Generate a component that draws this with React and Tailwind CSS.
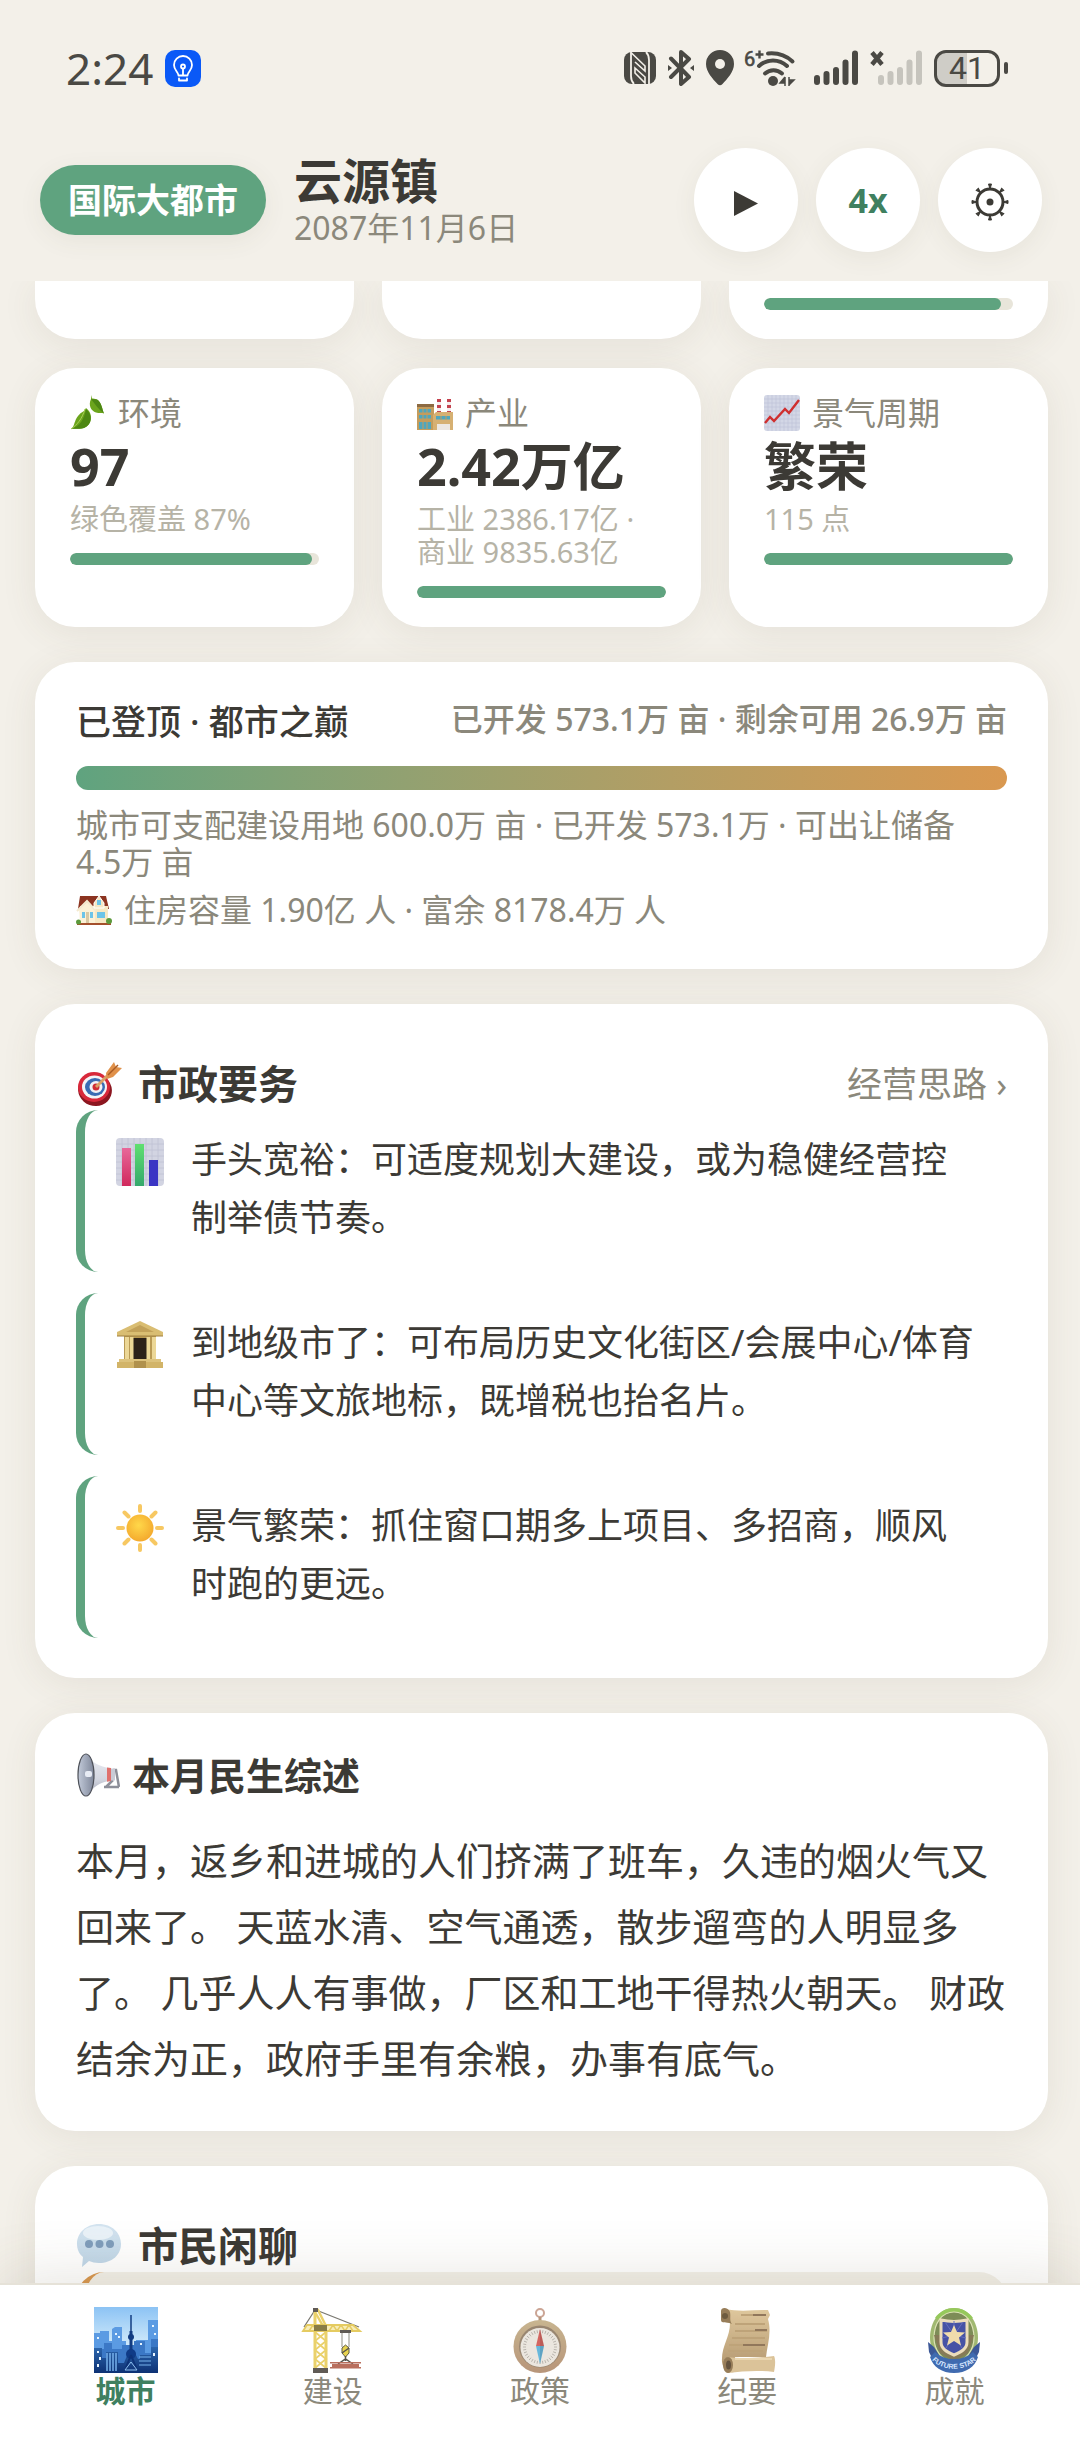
import clsx from "clsx";

/* ---------- status bar icons ---------- */

function BulbIcon() {
  return (
    <svg viewBox="0 0 36 37" className="h-[37px] w-9">
      <rect width="36" height="37" rx="10" fill="#0a59f7" />
      <g fill="none" stroke="#fff" strokeWidth="1.8" strokeLinecap="round" strokeLinejoin="round">
        <path d="M13.5 25.5c0-3.5-4.5-5-4.5-10.5a9 9 0 0 1 18 0c0 5.500-4.500 7-4.500 10.500z" />
        <path d="M14 28.500v2h8v-2M18 25v-6" />
        <circle cx="18" cy="16.500" r="2" />
      </g>
    </svg>
  );
}

function NfcIcon() {
  return (
    <svg viewBox="0 0 32 34" className="h-[34px] w-8">
      <rect y="1" width="32" height="32" rx="8" fill="#4a4944" />
      <path d="M7 1v24c0 4 1 6 3 8M25 33V9c0-4-1-6-3-8" stroke="#f3f0e9" strokeWidth="1.800" fill="none" />
      <path d="M7.500 2 21 15v5L11 11M11 17l10 9v6L11 22z" stroke="#f3f0e9" strokeWidth="1.600" fill="none" />
    </svg>
  );
}

function BluetoothIcon() {
  return (
    <svg viewBox="0 0 26 36" className="h-9 w-[26px]" fill="none" stroke="#4a4944" strokeWidth="4" strokeLinecap="round" strokeLinejoin="round">
      <path d="M3 8.500 21 27l-8 7V2l8 7L3 27" />
      <path d="M0 15v6l4-3zM26 15v6l-4-3z" fill="#4a4944" stroke="none" />
    </svg>
  );
}

function PinIcon() {
  return (
    <svg viewBox="0 0 28 36" className="h-9 w-7">
      <path d="M14 0A14 14 0 0 0 0 14c0 8 7 15 11.500 20a3.500 3.500 0 0 0 5 0C21 29 28 22 28 14A14 14 0 0 0 14 0z" fill="#4a4944" />
      <circle cx="14" cy="14" r="5" fill="#f3f0e9" />
    </svg>
  );
}

function WifiIcon() {
  return (
    <svg viewBox="0 0 56 38" className="h-[38px] w-14 overflow-visible">
      <text x="-2" y="17" fontSize="20" fill="#4a4944" stroke="#4a4944" strokeWidth=".6" className="font-['Roboto',sans-serif]">6</text>
      <path d="M9.500 5.500h8M13.500 1.500v8" stroke="#4a4944" strokeWidth="2.400" />
      <g fill="none" stroke="#4a4944" strokeWidth="4" strokeLinecap="round">
        <path d="M22 4.500c10-1 18 2 24.500 8" />
        <path d="M13 17c8-7.500 20-7.500 28 0" />
        <path d="M19 24.500c5-4.500 12-4.500 17 0" />
      </g>
      <circle cx="27" cy="32" r="5" fill="#4a4944" />
      <path d="M39 28v9M39 28l-5 6h5M43 28v9M43 36l5-5h-5" fill="#4a4944" stroke="#4a4944" strokeWidth="1.500" />
    </svg>
  );
}

function SignalIcon({ off }) {
  return (
    <svg viewBox={off ? "-8 0 52 36" : "0 0 44 36"} className={off ? "h-9 w-[52px]" : "h-9 w-11"}>
      <g stroke={off ? "#c6c4bd" : "#4a4944"} strokeWidth="6" strokeLinecap="round">
        <path d="M3 28v4M12.500 24v8M22 20v12M31.500 12.500V32M41 3.500V32" />
      </g>
      {off && <path d="M-6 2.500 4 14.500M4 2.500-6 14.500" stroke="#4a4944" strokeWidth="4.500" />}
    </svg>
  );
}

function Battery() {
  return (
    <div className="flex items-center gap-1">
      <div className="flex h-[37px] w-[66px] items-center justify-center rounded-xl border-[3px] border-[#4a4944] bg-linear-to-r from-[#cfcdc7] from-50% to-transparent to-50% font-['Roboto',sans-serif] text-[32px] leading-8">
        41
      </div>
      <div className="h-3 w-1 rounded-sm bg-[#4a4944]" />
    </div>
  );
}

/* ---------- emoji style drawings ---------- */

function LeafIcon({ className }) {
  return (
    <svg viewBox="0 0 36 36" className={className}>
      <path d="M1 34c5-3 2-12 13-18l2-3c8 6 6 17-2 20-4 1.500-8 0-13 1z" fill="#6ba41c" />
      <path d="M1 34C10 31 14 25 16 14c7 6 6 16-2 19-4 1.500-8 0-13 1z" fill="#4d8713" />
      <path d="M1 34c6-4 11-10 14-20" stroke="#a8cf5a" strokeWidth="1" fill="none" />
      <path d="M21 0v4c-3 6 0 12 5 13.500 3 1 6 0 8 1-2-4-2-11-7-14-2-1-4-1-5-1z" fill="#6ba41c" />
      <path d="M21 4c4 5 7 10 13 14.500-2-4-2-11-7-14z" fill="#4d8713" />
    </svg>
  );
}

function FactoryIcon({ className }) {
  return (
    <svg viewBox="0 0 36 36" className={className}>
      <path d="M20 4h4v17h-4zM30 4h4v17h-4z" fill="#f4eeee" />
      <path d="M20 4h4v3h-4zM20 10h4v3h-4zM20 16h4v3h-4zM30 4h4v3h-4zM30 10h4v3h-4zM30 16h4v3h-4z" fill="#c4434f" />
      <path d="M0 9h17v26H0z" fill="#c49c5c" />
      <path d="M0 9h17v3H0z" fill="#8c6a42" />
      <path d="M16 20l3-3h17v18H16z" fill="#d6b072" />
      <path d="M2 14h12v3.500H2zM2 20h12v3.500H2zM2 27h12v7H2zM19 21h14v3.500H19z" fill="#4fa6bd" />
      <path d="M6 14v20M10 14v20M24 21v4M29 21v4" stroke="#c49c5c" strokeWidth="1" />
      <path d="M20 29h13v6H20z" fill="#ece7e1" />
    </svg>
  );
}

function ChartIcon({ className }) {
  return (
    <svg viewBox="0 0 36 36" className={className}>
      <rect width="36" height="36" rx="3" fill="#d3d7e6" />
      <path d="M4 0v36M8 0v36M12 0v36M16 0v36M20 0v36M24 0v36M28 0v36M32 0v36M0 4h36M0 8h36M0 12h36M0 16h36M0 20h36M0 24h36M0 28h36M0 32h36" stroke="#bcc1d6" strokeWidth=".6" />
      <path d="M1 28l5-6 4 4L21 14l4 4L35 5" fill="none" stroke="#cf2f2f" strokeWidth="2.400" />
    </svg>
  );
}

function HouseIcon({ className }) {
  return (
    <svg viewBox="0 0 36 32" className={className}>
      <path d="M4 2h26l3 13H2z" fill="#8c3420" />
      <path d="M4 12h28v17H4z" fill="#f6e8c4" />
      <path d="M3 15 11 8l8 8v13H4z" fill="#fbf1d6" />
      <path d="M1 17 11 7l9 10" fill="none" stroke="#f4ead0" strokeWidth="2" />
      <path d="M18 9l5-7 5 7v5H18z" fill="#f6e8c4" stroke="#fff" strokeWidth="1" />
      <path d="M21 6h4v5h-4zM21 18h8v6h-8zM6 18h3v6H6zM14 18h3v6h-3z" fill="#6cc4e8" />
      <path d="M10 18h3v11h-3z" fill="#d8c9a4" />
      <path d="M1 30h34" stroke="#a4502c" strokeWidth="2" />
      <circle cx="2.500" cy="28" r="2.500" fill="#5c9a3c" />
      <circle cx="33" cy="27" r="3" fill="#5c9a3c" />
    </svg>
  );
}

function TargetIcon({ className }) {
  return (
    <svg viewBox="0 0 46 46" className={className}>
      <ellipse cx="19" cy="29" rx="17" ry="16" fill="#8c1620" transform="rotate(20 19 29)" />
      <ellipse cx="18" cy="26" rx="16" ry="15" fill="#d8283a" />
      <ellipse cx="18.500" cy="26" rx="12.500" ry="11.500" fill="#f4f4f6" />
      <ellipse cx="19" cy="26" rx="10" ry="9" fill="#3a6cb4" />
      <ellipse cx="20" cy="26" rx="6.500" ry="6" fill="#f1f2f6" />
      <circle cx="20" cy="26" r="3.500" fill="#cf2c34" />
      <path d="M20 26 37 9" stroke="#d9a066" strokeWidth="3" />
      <path d="M30 12l8-11 2 5 6 1-9 9-6 2z" fill="#e0914a" />
      <path d="M32 14 42 4" stroke="#a85a22" strokeWidth="1.500" />
    </svg>
  );
}

function BarsIcon({ className }) {
  return (
    <svg viewBox="0 0 48 48" className={className}>
      <defs>
        <linearGradient id="bar-pink" x2="0" y2="1"><stop stopColor="#e8689a" /><stop offset="1" stopColor="#d0295c" /></linearGradient>
        <linearGradient id="bar-green" x2="0" y2="1"><stop stopColor="#5fe070" /><stop offset="1" stopColor="#35a86c" /></linearGradient>
      </defs>
      <rect width="48" height="48" rx="4" fill="#d2d4e2" />
      <path d="M6 0v48M12 0v48M18 0v48M24 0v48M30 0v48M36 0v48M42 0v48M0 6h48M0 12h48M0 18h48M0 24h48M0 30h48M0 36h48M0 42h48" stroke="#bfc2d4" strokeWidth=".8" />
      <path d="M6 10h9v38H6z" fill="url(#bar-pink)" />
      <path d="M19 6h9v42h-9z" fill="url(#bar-green)" />
      <path d="M33 22h9v26h-9z" fill="#3b35c4" />
    </svg>
  );
}

function TempleIcon({ className }) {
  return (
    <svg viewBox="0 0 48 48" className={className}>
      <path d="M8 15h32v24H8z" fill="#b99a54" />
      <path d="M17 17h14v22H17z" fill="#2c2118" />
      <path d="M24 0 47 11v4H1v-4z" fill="#d9bd72" />
      <path d="M24 4 38 11H10z" fill="#c2a159" />
      <path d="M9 16h4v24H9zM14 16h3.500v24H14zM30.500 16H34v24h-3.500zM36 16h4v24h-4z" fill="#ecd796" />
      <path d="M3 38h42v3H3z" fill="#dcc27c" />
      <path d="M1 41h17v6H1zM30 41h17v6H30z" fill="#d2b468" />
      <path d="M18 40h12v7H18z" fill="#b0914c" />
      <path d="M1 15h46" stroke="#a08040" strokeWidth="1" />
    </svg>
  );
}

function SunIcon({ className }) {
  return (
    <svg viewBox="0 0 48 48" className={className}>
      <defs>
        <radialGradient id="sun-body" cx=".45" cy=".4" r=".65"><stop stopColor="#ffd84a" /><stop offset="1" stopColor="#f3a62b" /></radialGradient>
      </defs>
      <path d="M24 2v5M24 41v5M2 24h5M41 24h5M8.500 8.500l4 4M35.500 35.500l4 4M39.500 8.500l-4 4M12.500 35.500l-4 4" stroke="#f7c862" strokeWidth="4" strokeLinecap="round" />
      <circle cx="24" cy="24" r="13.500" fill="url(#sun-body)" />
    </svg>
  );
}

function HornIcon({ className }) {
  return (
    <svg viewBox="0 0 44 44" className={className}>
      <defs>
        <linearGradient id="horn-cone" x2="0" y2="1"><stop stopColor="#eceef4" /><stop offset=".6" stopColor="#d3d6e0" /><stop offset="1" stopColor="#9da1b0" /></linearGradient>
        <linearGradient id="horn-mouth" x2="1"><stop stopColor="#c2cad9" /><stop offset="1" stopColor="#7f879a" /></linearGradient>
      </defs>
      <path d="M37 17h3l3 17M28 34l15 0M37 27l-7 7" fill="none" stroke="#8d8f99" strokeWidth="2.500" />
      <path d="M10 1c5 8 14 13 24 14v13c-10 1-17 6-23 15z" fill="url(#horn-cone)" />
      <path d="M31 14.500l4 .5v13l-4 .8z" fill="#e0706c" />
      <path d="M35 15.500h4v12h-4z" fill="#c9cbd6" />
      <ellipse cx="10" cy="22" rx="8" ry="21" fill="url(#horn-mouth)" stroke="#4d5058" strokeWidth="1.200" />
      <rect x="9" y="18" width="7" height="6" rx="2" fill="#e7ebf4" />
    </svg>
  );
}

function ChatIcon({ className }) {
  return (
    <svg viewBox="0 0 46 44" className={className}>
      <defs>
        <linearGradient id="chat-body" x2="0" y2="1"><stop stopColor="#d4e4f0" /><stop offset="1" stopColor="#bfd6e8" /></linearGradient>
      </defs>
      <path d="M23 0c13 0 22 9 22 20S36 39 23 39c-4 0-7-1-10-2l-7 6 1-10C3 30 1 25 1 20 1 9 10 0 23 0z" fill="url(#chat-body)" />
      <ellipse cx="22" cy="9" rx="15" ry="7" fill="#e9f2f8" />
      <g fill="#7f9dbb">
        <circle cx="13" cy="20" r="4" />
        <circle cx="23.500" cy="20" r="4" />
        <circle cx="34" cy="20" r="4" />
      </g>
    </svg>
  );
}

function CityIcon({ className }) {
  return (
    <svg viewBox="0 0 64 66" className={className}>
      <defs>
        <linearGradient id="city-sky" x2="0" y2="1"><stop stopColor="#8cc3f4" /><stop offset=".6" stopColor="#d4ecfb" /></linearGradient>
        <linearGradient id="city-front" x2="0" y2="1"><stop stopColor="#2c66ad" /><stop offset="1" stopColor="#0c2f72" /></linearGradient>
      </defs>
      <path d="M0 0h64v66H0z" fill="url(#city-sky)" />
      <path d="M0 26h6v-2h9v10h3V22l3-2h7v14h4v8h10v-9h12v-20h10v53H0z" fill="#5b9be3" />
      <path d="M0 42h10v-6h8v6h10v-4h12v-4h11v12h6V32h7v34H0z" fill="#3b78c6" />
      <path d="M0 41h8v10h4v-6h12v11h6l4-10h7l3 6h2v-4h11v-8h7v27H0z" fill="url(#city-front)" />
      <path d="M13 46v18M16 46v18M19 46v18M22 46v18" stroke="#77b1ec" strokeWidth="1.500" />
      <path d="M45 50h12M45 54h12M45 58h12" stroke="#77b1ec" strokeWidth="1.200" />
      <path d="M37 8v18" stroke="#123c82" strokeWidth="1.500" />
      <path d="M35.500 24h3v26h-3z" fill="#123c82" />
      <circle cx="37" cy="30" r="3" fill="#123c82" />
      <circle cx="37" cy="47" r="5" fill="#0f3a86" />
      <path d="M37 48l-6 15M37 48l6 15" stroke="#0d3277" strokeWidth="2" />
      <path d="M31 63l6-8 6 8z" fill="none" stroke="#8fc0f0" strokeWidth="1" />
      <path d="M4 44v2M6 50v3M4 57v3M22 26v2M25 29v2M4 30v2M47 36v2M59 18v2M61 26v2M60 46v3" stroke="#e8f5ff" strokeWidth="2" />
    </svg>
  );
}

function CraneIcon({ className }) {
  return (
    <svg viewBox="0 0 64 66" className={className}>
      <path d="M14 3 3 20M15 3l43 17" stroke="#6c6a62" strokeWidth="1.300" fill="none" />
      <path d="M14 3v58M25 22v39" stroke="#e8cd5c" strokeWidth="3" />
      <path d="M14 25l11 9-11 9 11 9-11 9M25 25l-11 9 11 9-11 9 11 9" stroke="#e8cd5c" strokeWidth="1.800" fill="none" />
      <path d="M14 5l8 14M13 3h4l8 16" stroke="#e8cd5c" strokeWidth="2.500" fill="none" />
      <path d="M2 24l4-6h46l7 6z" fill="#f8ecb0" stroke="#e3c650" strokeWidth="1.800" />
      <path d="M8 24l4-6 4 6M28 24l4-6 4 6 4-6 4 6 4-6 4 6" stroke="#e3c650" strokeWidth="1.500" fill="none" />
      <path d="M13 18h13v6H13z" fill="#7d7033" />
      <path d="M12 1h5v4h-5zM39 23h11v3H39zM12 61h15v5H12z" fill="#4f4a44" />
      <path d="M41 26v14M48 26v14" stroke="#9a9890" strokeWidth="1.200" />
      <path d="M41 41l3.500-3 3.500 3v5l-3.500 4-3.500-4z" fill="#e6cf3d" stroke="#4f4a30" strokeWidth="1" />
      <path d="M41 46l7-5M44.500 49v5M37 57l7.500-5 7.500 5" stroke="#454239" strokeWidth="1.500" fill="none" />
      <path d="M29 55h31v1.500H29zM31 57h27v3H31zM29 60h31v1.500H29z" fill="#b2604c" />
    </svg>
  );
}

function CompassIcon({ className }) {
  const ticks = Array.from({ length: 36 }, (_, i) => i * 10);
  return (
    <svg viewBox="0 0 64 66" className={className}>
      <defs>
        <linearGradient id="compass-rim" x2="0" y2="1"><stop stopColor="#c2ad84" /><stop offset="1" stopColor="#b08a6c" /></linearGradient>
      </defs>
      <circle cx="32" cy="6" r="4" fill="none" stroke="#c69c8a" strokeWidth="2" />
      <path d="M32 10v5" stroke="#b08a6c" strokeWidth="3" />
      <circle cx="32" cy="39.500" r="26.500" fill="url(#compass-rim)" />
      <circle cx="32" cy="39.500" r="21" fill="#8f7a62" />
      <circle cx="32" cy="40.500" r="19.500" fill="#e9e4dc" />
      {ticks.map((a) => (
        <path key={a} d="M32 23v3" stroke="#a8a29a" strokeWidth=".8" transform={`rotate(${a} 32 40)`} />
      ))}
      <path d="M32 22l4 17h-8z" fill="#cf5650" />
      <path d="M32 57l4-18h-8z" fill="#58b0d8" />
      <path d="M32 22v35l4-18z" fill="#000" opacity=".12" />
    </svg>
  );
}

function ScrollIcon({ className }) {
  return (
    <svg viewBox="0 0 64 66" className={className}>
      <defs>
        <linearGradient id="scroll-page" x2="0" y2="1"><stop stopColor="#dcc293" /><stop offset="1" stopColor="#a98a5e" /></linearGradient>
      </defs>
      <path d="M10 2c14 3 28 1 43 1l2 5-2 4c4 14-1 27-2 38H20v15c-8 1-12-3-13-10-1-16 8-24 8-39L10 15z" fill="url(#scroll-page)" />
      <path d="M6 4c0-4 7-4 9 1 1 5-1 8 2 12-5-3-11 0-11-4z" fill="#8c7048" />
      <circle cx="10" cy="9" r="3" fill="#5f4a2c" />
      <path d="M26 8h24M20 17h30M20 24h32M17 31h33M14 38h35M13 44h35" stroke="#b89a6b" strokeWidth="1.800" />
      <path d="M38 8h13M40 23h12M28 38h22" stroke="#86694a" strokeWidth="2" />
      <path d="M13 50c12 2 30 1 46-1 2 4 1 11 0 16-15-2-31-1-46 1-6-3-6-14 0-16z" fill="#d8bd8e" />
      <ellipse cx="13" cy="58" rx="5" ry="8" fill="#8c7048" />
      <ellipse cx="13.500" cy="58" rx="2.500" ry="4.500" fill="#54412a" />
      <path d="M20 52h37" stroke="#e8d2a8" strokeWidth="2" />
    </svg>
  );
}

function BadgeIcon({ className }) {
  return (
    <svg viewBox="0 0 64 66" className={className}>
      <defs>
        <path id="badge-arc" d="M11 54a25 17 0 0 0 42 0" />
      </defs>
      <path d="M32 1C18 1 8 14 8 31c0 13 10 28 24 28s24-15 24-28C56 14 46 1 32 1z" fill="#96b162" />
      <path d="M32 1c-8 0-15 4-19 10l7 3c6-6 18-6 24 0l7-3C47 5 40 1 32 1z" fill="#8bc34a" />
      <path d="M32 5C20 5 12 16 12 31c0 11 8 24 20 24s20-13 20-24C52 16 44 5 32 5z" fill="#6f8045" stroke="#d9dfae" strokeWidth="1.200" />
      <path d="M12 28h40L46 46 32 54 18 46z" fill="#7a6c45" />
      <path d="M19 13c9 2 17 2 26 0v22c0 7-6 10-13 13-7-3-13-6-13-13z" fill="#34409c" stroke="#ead9b4" strokeWidth="3" />
      <path d="M32 28 23 15M32 28 41 15M32 28 20 31M32 28l12 3M32 28l-8 13M32 28l8 13M32 28V14" stroke="#5560b8" strokeWidth="1" />
      <path d="M32 18l3 7 8 .5-6 5 2 8-7-4.500-7 4.500 2-8-6-5 8-.5z" fill="#f0d9a4" />
      <path d="M6 35l6 5 5 8-6 5-4-8zM58 35l-6 5-5 8 6 5 4-8z" fill="#27468c" />
      <path d="M13 45a24 18 0 0 0 38 0l5 5c-3 10-12 16-24 16S11 60 8 50z" fill="#2c5ca8" />
      <text fontSize="7" fontWeight="700" fill="#d3e4ff" textAnchor="middle" className="font-['Liberation_Sans',sans-serif]">
        <textPath href="#badge-arc" startOffset="50%">FUTURE STAR</textPath>
      </text>
    </svg>
  );
}

function PlayIcon() {
  return (
    <svg viewBox="0 0 26 34" className="h-[34px] w-[26px]">
      <path d="M1 8v25l24-12.500z" fill="#3c3a35" />
    </svg>
  );
}

function GearIcon() {
  const teeth = [0, 45, 90, 135, 180, 225, 270, 315];
  return (
    <svg viewBox="0 0 38 42" className="h-[42px] w-[38px]">
      <circle cx="19" cy="23" r="13" fill="none" stroke="#3c3a35" strokeWidth="3" />
      {teeth.map((a) => (
        <path key={a} d="M19 10 17.500 5h3z" fill="#3c3a35" stroke="#3c3a35" transform={`rotate(${a} 19 23)`} />
      ))}
      <circle cx="19" cy="23" r="3.500" fill="#3c3a35" />
    </svg>
  );
}

/* ---------- data ---------- */

const stats = [
  { icon: LeafIcon, label: "环境", value: "97", notes: ["绿色覆盖 87%"], percent: 97 },
  { icon: FactoryIcon, label: "产业", value: "2.42万亿", notes: ["工业 2386.17亿 ·", "商业 9835.63亿"], percent: 100 },
  { icon: ChartIcon, label: "景气周期", value: "繁荣", notes: ["115 点"], percent: 100 },
];

const tasks = [
  { icon: BarsIcon, text: "手头宽裕：可适度规划大建设，或为稳健经营控制举债节奏。" },
  { icon: TempleIcon, text: "到地级市了：可布局历史文化街区/会展中心/体育中心等文旅地标，既增税也抬名片。" },
  { icon: SunIcon, text: "景气繁荣：抓住窗口期多上项目、多招商，顺风时跑的更远。" },
];

const tabs = [
  { icon: CityIcon, label: "城市", active: true },
  { icon: CraneIcon, label: "建设" },
  { icon: CompassIcon, label: "政策" },
  { icon: ScrollIcon, label: "纪要" },
  { icon: BadgeIcon, label: "成就" },
];

/* ---------- pieces ---------- */

function Meter({ percent }) {
  return (
    <div className="h-3 overflow-hidden rounded-full bg-[#e8e5da]">
      <div className="h-full rounded-full bg-[#5fa37f]" style={{ width: `${percent}%` }} />
    </div>
  );
}

function Card({ className, children }) {
  return (
    <section className={clsx("rounded-[40px] bg-white px-[41px] shadow-[0_6px_36px_rgba(90,80,50,0.09)]", className)}>
      {children}
    </section>
  );
}

function StatCard({ icon: Icon, label, value, notes, percent }) {
  return (
    <section className="rounded-[40px] bg-white px-[35px] pt-7 pb-[29px] shadow-[0_6px_36px_rgba(90,80,50,0.09)]">
      <h3 className="flex h-[34px] items-center gap-3 text-[32px] leading-[34px] text-[#8b887b]">
        <Icon className="h-9 w-9" />
        {label}
      </h3>
      <p className="text-[52px] leading-[72px] font-bold">{value}</p>
      <div className="mb-[18px] text-[29px] leading-[33px] whitespace-nowrap text-[#b6b3a6]">
        {notes.map((note) => (
          <p key={note}>{note}</p>
        ))}
      </div>
      <Meter percent={percent} />
    </section>
  );
}

function RoundButton({ label, children }) {
  return (
    <button
      aria-label={label}
      className="flex h-[104px] w-[104px] items-center justify-center rounded-full bg-white text-[34px] font-bold text-[#3f8060] shadow-[0_6px_24px_rgba(90,80,50,0.07)]"
    >
      {children}
    </button>
  );
}

export default function App() {
  return (
    <div className="flex h-screen flex-col overflow-hidden bg-[#f3f0e9] font-['Noto_Sans','Noto_Sans_CJK_SC',sans-serif] text-[#3c3a35]">
      {/* Status bar */}
      <div className="flex h-[136px] shrink-0 items-center justify-between pr-[72px] pl-[66px] text-[#4a4944]">
        <div className="flex items-center gap-3">
          <span className="text-[44px] leading-[44px]">2:24</span>
          <BulbIcon />
        </div>
        <div className="flex items-center gap-3">
          <NfcIcon />
          <BluetoothIcon />
          <PinIcon />
          <WifiIcon />
          <SignalIcon />
          <SignalIcon off />
          <Battery />
        </div>
      </div>

      {/* Header */}
      <header className="flex h-[145px] shrink-0 items-start justify-between pt-3 pr-[38px] pl-10">
        <div className="flex h-[104px] items-center gap-7">
          <span className="flex h-[70px] items-center rounded-full bg-[#5fa37f] px-7 text-[34px] leading-[64px] font-bold text-white shadow-[0_6px_24px_rgba(90,80,50,0.07)]">
            国际大都市
          </span>
          <div>
            <h1 className="text-[48px] leading-[56px] font-bold">云源镇</h1>
            <p className="text-[32px] leading-[38px] text-[#8b887b]">2087年11月6日</p>
          </div>
        </div>
        <div className="flex gap-[18px]">
          <RoundButton label="播放"><PlayIcon /></RoundButton>
          <RoundButton label="四倍速">4x</RoundButton>
          <RoundButton label="设置"><GearIcon /></RoundButton>
        </div>
      </header>

      {/* Scrolled content */}
      <main className="flex min-h-0 flex-1 flex-col gap-[35px] overflow-hidden pr-8 pl-[35px] *:shrink-0">
        <div className="grid grid-cols-3 gap-x-7 gap-y-[29px]">
          <div className="h-[58px] rounded-b-[40px] bg-white shadow-[0_6px_36px_rgba(90,80,50,0.09)]" />
          <div className="h-[58px] rounded-b-[40px] bg-white shadow-[0_6px_36px_rgba(90,80,50,0.09)]" />
          <div className="h-[58px] rounded-b-[40px] bg-white px-[35px] pt-[17px] shadow-[0_6px_36px_rgba(90,80,50,0.09)]">
            <Meter percent={95} />
          </div>
          {stats.map((stat) => (
            <StatCard key={stat.label} {...stat} />
          ))}
        </div>

        {/* Land */}
        <Card className="pt-[34px] pb-[41px]">
          <div className="flex items-start justify-between whitespace-nowrap">
            <h2 className="text-[35px] leading-[52px] font-medium">已登顶 · 都市之巅</h2>
            <span className="text-[32px] leading-[46px] font-medium text-[#8b887b]">已开发 573.1万 亩 · 剩余可用 26.9万 亩</span>
          </div>
          <div className="mt-[18px] h-6 rounded-full bg-linear-to-r from-[#5fa37f] to-[#d99850]" />
          <p className="mt-4 text-[32px] leading-[37px] text-[#8b887b]">
            城市可支配建设用地 600.0万 亩 · 已开发 573.1万 · 可出让储备 4.5万 亩
          </p>
          <p className="mt-3 flex items-center gap-3 text-[32px] leading-[36px] text-[#8b887b]">
            <HouseIcon className="h-8 w-9" />
            住房容量 1.90亿 人 · 富余 8178.4万 人
          </p>
        </Card>

        {/* Tasks */}
        <Card className="pt-[54px] pb-10">
          <div className="flex h-[52px] items-center justify-between">
            <h2 className="flex items-center gap-4 text-[40px] leading-[52px] font-bold">
              <TargetIcon className="h-[46px] w-[46px]" />
              市政要务
            </h2>
            <a href="#ideas" className="text-[35px] leading-[52px] text-[#8b887b]">经营思路 ›</a>
          </div>
          <ul className="space-y-[21px]">
            {tasks.map(({ icon: Icon, text }) => (
              <li key={text} className="flex h-[162px] gap-[27px] rounded-[22px] border-l-[9px] border-[#5fa37f] pt-[21px] pr-[27px] pl-[31px]">
                <Icon className="mt-[7px] h-12 w-12 shrink-0" />
                <p className="text-[36px] leading-[58px]">{text}</p>
              </li>
            ))}
          </ul>
        </Card>

        {/* Monthly summary */}
        <Card className="pt-9 pb-[41px]">
          <h2 className="flex items-center gap-3 text-[38px] leading-[52px] font-bold">
            <HornIcon className="h-11 w-11" />
            本月民生综述
          </h2>
          <p className="mt-[25px] font-['Noto_Sans_CJK_SC',sans-serif] text-[38px] leading-[66px]">
            本月，返乡和进城的人们挤满了班车，久违的烟火气又回来了。 天蓝水清、空气通透，散步遛弯的人明显多了。 几乎人人有事做，厂区和工地干得热火朝天。 财政结余为正，政府手里有余粮，办事有底气。
          </p>
        </Card>

        {/* Chat */}
        <Card className="pt-[54px]">
          <h2 className="flex items-center gap-4 text-[40px] leading-[52px] font-bold">
            <ChatIcon className="h-11 w-[46px]" />
            市民闲聊
          </h2>
          <div className="h-40 rounded-[28px] border-l-[9px] border-[#d99850] bg-[#f3f0e9]" />
        </Card>
      </main>

      {/* Tab bar */}
      <nav className="relative grid h-[155px] shrink-0 grid-cols-5 border-t-2 border-[#e6e2d8] bg-white px-[22px] shadow-[0_-8px_60px_rgba(90,80,50,0.14)]">
        {tabs.map(({ icon: Icon, label, active }) => (
          <button
            key={label}
            className={clsx(
              "flex flex-col items-center pt-[22px] text-[30px] leading-9",
              active ? "font-bold text-[#3f8060]" : "text-[#8b887b]"
            )}
          >
            <Icon className={clsx("h-[66px] w-16", !active && "opacity-90")} />
            {label}
          </button>
        ))}
      </nav>
    </div>
  );
}
